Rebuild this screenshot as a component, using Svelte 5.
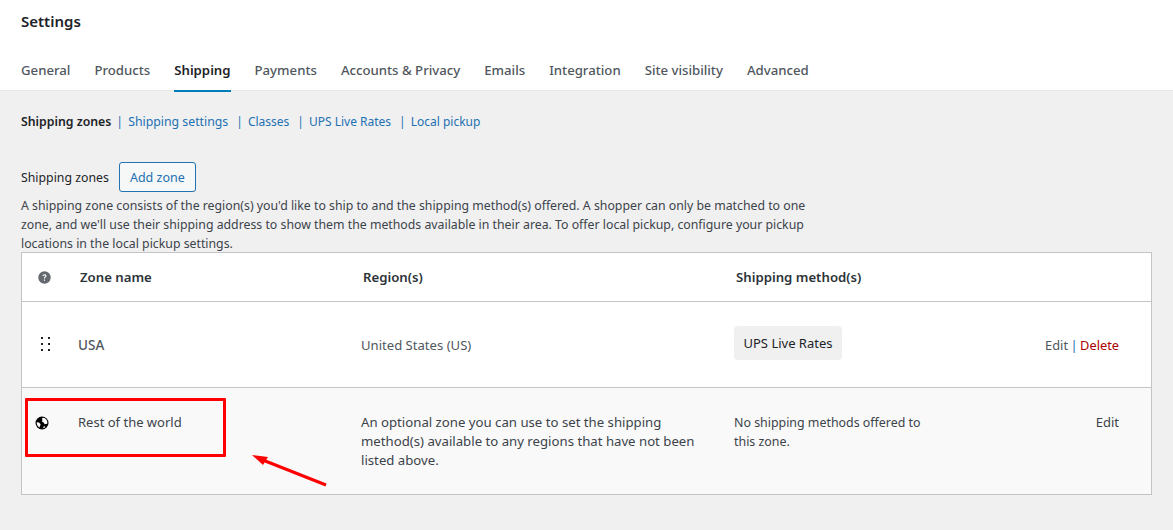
<script>
  const tabs = ['General','Products','Shipping','Payments','Accounts & Privacy','Emails','Integration','Site visibility','Advanced'];
  const subs = ['Shipping settings','Classes','UPS Live Rates','Local pickup'];
</script>

<div class="page">
  <header class="head">
    <h1>Settings</h1>
    <nav class="tabs">
      {#each tabs as t}
        <span class="tab" class:active={t === 'Shipping'}>{t}</span>
      {/each}
    </nav>
  </header>

  <main class="body">
    <div class="subs">
      <b>Shipping zones</b>
      {#each subs as s, i}
        <span class="sub" class:tight={i > 0}><i>|</i>{s}</span>
      {/each}
    </div>

    <div class="title">
      <span>Shipping zones</span>
      <span class="btn">Add zone</span>
    </div>
    <p class="desc">A shipping zone consists of the region(s) you'd like to ship to and the shipping method(s) offered. A shopper can only be matched to one zone, and we'll use their shipping address to show them the methods available in their area. To offer local pickup, configure your pickup locations in the local pickup settings.</p>

    <section class="table">
      <div class="row hrow">
        <div class="ic">
          <svg width="13" height="13" viewBox="0 0 13 13"><circle cx="6.5" cy="6.5" r="6.2" fill="#646970"/><path d="M4.500 5.100c0-1.200.9-1.900 2-1.900s2 .7 2 1.700c0 1.300-1.500 1.400-1.500 2.600H5.900c0-1.700 1.400-1.800 1.400-2.500 0-.4-.3-.7-.8-.7s-.8.3-.8.8zM5.900 8.400H7v1.300H5.900z" fill="#fff"/></svg>
        </div>
        <div class="zn">Zone name</div>
        <div class="rg">Region(s)</div>
        <div class="mt">Shipping method(s)</div>
      </div>

      <div class="row r1">
        <div class="ic">
          <svg class="drag" width="9" height="14" viewBox="0 0 9 14"><g fill="#1d2327"><rect x="0" y="0" width="2" height="2"/><rect x="7" y="0" width="2" height="2"/><rect x="0" y="6" width="2" height="2"/><rect x="7" y="6" width="2" height="2"/><rect x="0" y="12" width="2" height="2"/><rect x="7" y="12" width="2" height="2"/></g></svg>
        </div>
        <div class="zn2 usa">USA</div>
        <div class="rg2 us">United States (US)</div>
        <div class="mt2"><span class="pill">UPS Live Rates</span></div>
        <div class="act small"><span class="ed">Edit</span><span class="pipe">|</span><span class="del">Delete</span></div>
      </div>

      <div class="row r2">
        <div class="ic">
          <svg class="globe" width="14" height="14" viewBox="0 0 14 14"><circle cx="7" cy="7" r="6.500" fill="#000"/><path d="M8 1.800c1.600.2 3 1.100 3.700 2.400.7 1.200.8 2.500.5 3.600L9.500 8.300 8.800 6.500 7 5.800 7.500 4 6.800 2.800zM1.700 6.200l2.300.4 1.600 1.600-.4 1.500-.9 1.700C2.700 10.300 1.600 8.300 1.700 6.200zM8.500 10.500l1.300-.3.500 1.100c-.6.500-1.300.8-2 1z" fill="#fff"/></svg>
        </div>
        <div class="zn2">Rest of the world</div>
        <div class="rg2 long">An optional zone you can use to set the shipping method(s) available to any regions that have not been listed above.</div>
        <div class="mt2 nom">No shipping methods offered to this zone.</div>
        <div class="act">Edit</div>
      </div>
    </section>
  </main>

  <div class="redbox"></div>
  <svg class="arrow" width="90" height="50" viewBox="0 0 90 50"><path d="M74 33 12 8.500" stroke="#f00" stroke-width="3" fill="none"/><path d="M0 3 16 5 11 13z" fill="#f00"/></svg>
</div>

<style>
  :global(body) { margin: 0; background: #f0f0f1; }
  .page {
    position: relative;
    width: 1173px;
    height: 530px;
    overflow: hidden;
    font-family: "Noto Sans", "Open Sans", sans-serif;
    font-size: 13px;
    color: #3c434a;
  }
  .head {
    height: 91px;
    background: #fff;
    padding: 0 21px;
    box-sizing: border-box;
    border-bottom: 1px solid #e8e8e9;
  }
  h1 {
    margin: 0;
    padding-top: 11px;
    font-size: 15px;
    line-height: 21px;
    font-weight: 600;
    color: #1d2327;
  }
  .tabs {
    display: flex;
    gap: 24px;
    margin-top: 27px;
  }
  .tab {
    height: 33px;
    line-height: 23px;
    font-size: 13.2px;
    font-weight: 500;
    color: #50575e;
    box-sizing: border-box;
  }
  .active {
    color: #1d2327;
    font-weight: 600;
    border-bottom: 2px solid #007cba;
  }
  .body { padding: 0 21px; }
  .subs {
    display: flex;
    height: 20px;
    padding-top: 21px;
    line-height: 20px;
    font-size: 12.3px;
    color: #2271b1;
  }
  .subs b { color: #1d2327; font-weight: 600; margin-right: -3px; }
  .sub i { font-style: normal; margin: 0 5px 0 8px; }
  .tight { font-size: 12px; }
  .title {
    display: flex;
    align-items: center;
    gap: 10px;
    margin-top: 30px;
    font-size: 12.3px;
    color: #1d2327;
  }
  .btn {
    box-sizing: border-box;
    height: 30px;
    width: 77px;
    display: flex;
    align-items: center;
    justify-content: center;
    border: 1px solid #2271b1;
    border-radius: 3px;
    background: #f6f7f7;
    color: #2271b1;
    font-size: 12.5px;
  }
  .desc {
    margin: 4px 0 -1px;
    width: 800px;
    font-size: 12.3px;
    line-height: 19px;
    color: #3c434a;
  }
  .table {
    margin-top: 0;
    width: 1131px;
    box-sizing: border-box;
    border: 1px solid #c3c4c7;
    background: #fff;
  }
  .row {
    display: grid;
    grid-template-columns: 58px 283px 373px 1fr 140px;
    box-sizing: border-box;
  }
  .hrow {
    height: 49px;
    align-items: center;
    font-weight: 600;
    font-size: 13.2px;
    color: #2c3338;
    border-bottom: 1px solid #c3c4c7;
  }
  .hrow .ic { padding-left: 16px; padding-top: 3px; }
  .hrow .mt { grid-column: 4 / 6; }
  .r1 {
    height: 86px;
    align-items: center;
    border-bottom: 1px solid #c3c4c7;
  }
  .r1 .ic { padding-left: 19px; }
  .drag { display: block; margin-top: -1px; }
  .zn2 { margin-left: -2px; }
  .usa { font-weight: 500; font-size: 13.5px; color: #50575e; }
  .rg2 { margin-left: -2px; }
  .us { color: #50575e; font-size: 13.1px; }
  .mt2 { margin-left: -2px; }
  .pill {
    display: inline-block;
    width: 108px;
    box-sizing: border-box;
    text-align: center;
    background: #f0f0f1;
    border-radius: 4px;
    line-height: 34px;
    color: #1d2327;
    margin-top: -4px;
    vertical-align: top;
  }
  .act {
    text-align: right;
    padding-right: 32px;
    color: #3c434a;
  }
  .small { font-size: 12.8px; }
  .ed { color: #50575e; }
  .pipe { color: #2271b1; margin: 0 2.5px; }
  .del { color: #a00; }
  .r2 {
    height: 106px;
    background: #f9f9f9;
    padding-top: 25px;
    line-height: 19px;
    align-items: start;
  }
  .r2 .ic { padding-left: 13px; padding-top: 3px; }
  .globe { display: block; }
  .long { width: 350px; font-size: 13.2px; }
  .nom { width: 200px; font-size: 12.4px; }
  .redbox {
    position: absolute;
    left: 25px;
    top: 398px;
    width: 201px;
    height: 59px;
    box-sizing: border-box;
    border: 3px solid #f00;
    border-radius: 1px;
  }
  .arrow {
    position: absolute;
    left: 252px;
    top: 452px;
  }
</style>
